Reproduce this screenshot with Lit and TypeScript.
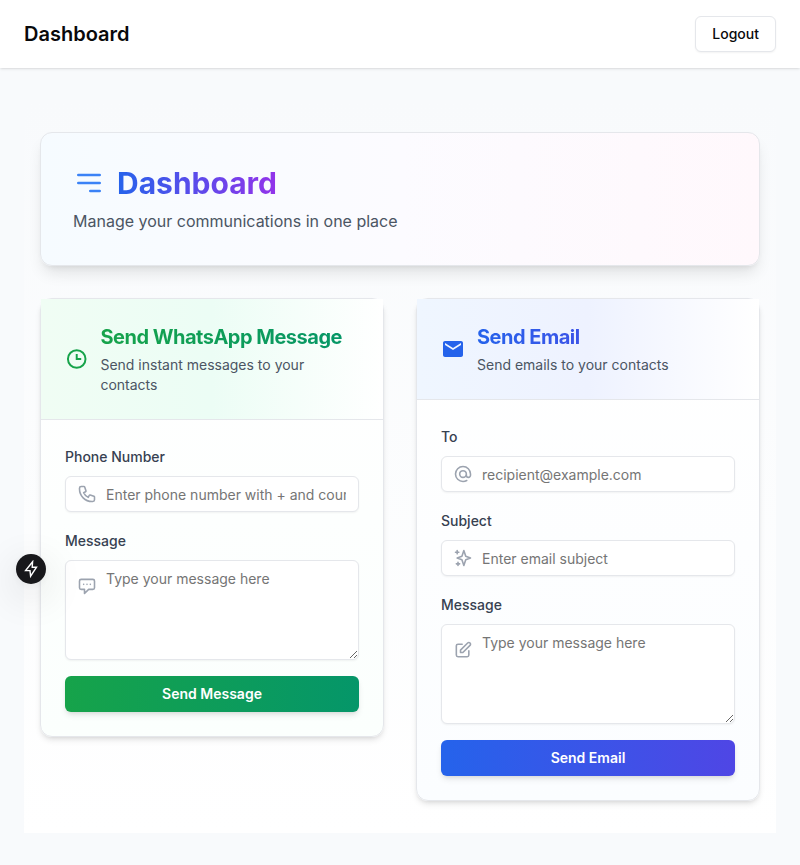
import { LitElement, html, css, svg } from "lit";
import { customElement } from "lit/decorators.js";

const outline = (d: string) => html`<svg class="field-icon" viewBox="0 0 24 24" fill="none" stroke="currentColor" stroke-width="1.9" stroke-linecap="round" stroke-linejoin="round">${svg`<path d=${d}></path>`}</svg>`;

const PHONE = "M3 5a2 2 0 012-2h3.28a1 1 0 01.948.684l1.498 4.493a1 1 0 01-.502 1.21l-2.257 1.13a11.042 11.042 0 005.516 5.516l1.13-2.257a1 1 0 011.21-.502l4.493 1.498a1 1 0 01.684.949V19a2 2 0 01-2 2h-1C9.716 21 3 14.284 3 6V5z";
const CHAT = "M8 10h.01M12 10h.01M16 10h.01M9 16H5a2 2 0 01-2-2V6a2 2 0 012-2h14a2 2 0 012 2v8a2 2 0 01-2 2h-5l-5 5v-5z";
const AT = "M16 12a4 4 0 10-8 0 4 4 0 008 0zm0 0v1.5a2.5 2.5 0 005 0V12a9 9 0 10-9 9m4.5-1.206a8.959 8.959 0 01-4.5 1.207";
const SPARK = "M5 3v4M3 5h4M6 17v4m-2-2h4m5-16l2.286 6.857L21 12l-5.714 2.143L13 21l-2.286-6.857L5 12l5.714-2.143L13 3z";
const PENCIL = "M11 5H6a2 2 0 00-2 2v11a2 2 0 002 2h11a2 2 0 002-2v-5m-1.414-9.414a2 2 0 112.828 2.828L11.828 15H9v-2.828l8.586-8.586z";

@customElement("app-root")
export class AppRoot extends LitElement {
  static styles = css`
    :host { display: block; min-height: 865px; background: #f8fafc; font-family: Inter, "Liberation Sans", sans-serif; font-size: 16px; line-height: 24px; color: #09090b; }
    * { box-sizing: border-box; }
    h1, h2, h3, p { margin: 0; }
    svg { display: block; }
    .top { display: flex; justify-content: space-between; align-items: center; height: 68px; padding: 0 24px; background: #fff; box-shadow: 0 1px 3px rgba(0,0,0,.1), 0 1px 2px -1px rgba(0,0,0,.1); }
    .brand { font-size: 20px; line-height: 28px; font-weight: 600; }
    .logout { height: 36px; padding: 0 16px; border: 1px solid #e5e7eb; border-radius: 6px; background: #fff; font: 500 14px/20px Inter, sans-serif; color: #09090b; box-shadow: 0 1px 2px rgba(0,0,0,.05); }
    main { padding: 32px 24px; }
    .panel { padding: 32px 16px; display: flex; flex-direction: column; gap: 32px; background: linear-gradient(to bottom, #f8fafc, #fff); }
    .hero { border: 1px solid #e5e7eb; border-radius: 12px; padding: 32px; background: linear-gradient(to right, #f6fbff, #fcfbff 50%, #fff8fc); box-shadow: 0 10px 15px -3px rgba(0,0,0,.1), 0 4px 6px -4px rgba(0,0,0,.1); }
    .hero-row { display: flex; align-items: center; gap: 12px; height: 36px; }
    .hero-icon { width: 32px; height: 32px; color: #3b82f6; }
    .hero h2 { font-size: 30px; line-height: 36px; font-weight: 700; }
    .hero p { margin-top: 8px; color: #4b5563; }
    .clip { -webkit-background-clip: text; background-clip: text; color: transparent; }
    .hero-title { background-image: linear-gradient(to right, #2563eb, #9333ea); }
    .grid { display: grid; grid-template-columns: 1fr 1fr; gap: 32px; align-items: start; }
    .card { border: 1px solid #e5e7eb; border-radius: 12px; box-shadow: 0 4px 6px -1px rgba(0,0,0,.1), 0 2px 4px -2px rgba(0,0,0,.1); }
    .card.green { background: linear-gradient(to bottom, #fff, #fbfffd); }
    .card.blue { background: linear-gradient(to bottom, #fff, #fbfdff); }
    .head { display: flex; align-items: center; gap: 12px; padding: 24px; border-bottom: 1px solid #e5e7eb; }
    .green .head { background: linear-gradient(to right, #f0fdf4, #ecfdf5 50%, #fff); }
    .blue .head { background: linear-gradient(to right, #eff6ff, #eef2ff 50%, #fff); }
    .head svg { width: 24px; height: 24px; }
    .green .head svg { color: #16a34a; }
    .blue .head svg { color: #2563eb; }
    .head h3 { font-size: 20px; line-height: 28px; font-weight: 700; letter-spacing: -0.5px; }
    .green h3, .green .send { background-image: linear-gradient(to right, #16a34a, #059669); }
    .blue h3, .blue .send { background-image: linear-gradient(to right, #2563eb, #4f46e5); }
    .head p { margin-top: 4px; font-size: 14px; line-height: 20px; color: #4b5563; }
    .form { display: flex; flex-direction: column; gap: 16px; padding: 24px; }
    .field { display: flex; flex-direction: column; gap: 8px; }
    .label { height: 24px; font-size: 14px; line-height: 26px; font-weight: 500; color: #374151; }
    .wrap { position: relative; display: flex; }
    .field-icon { position: absolute; left: 12px; top: 8px; width: 20px; height: 20px; color: #9ca3af; }
    .wrap.tall .field-icon { top: 16px; }
    input, textarea { display: block; width: 100%; margin: 0; border: 1px solid #e5e7eb; border-radius: 6px; background: #fff; box-shadow: 0 1px 2px rgba(0,0,0,.05); font: 400 14px/20px Inter, sans-serif; outline: none; }
    input { height: 36px; padding: 4px 12px 4px 40px; }
    textarea { height: 100px; padding: 8px 12px 8px 40px; resize: vertical; }
    ::placeholder { color: #757575; opacity: 1; }
    .send { height: 36px; border: 0; border-radius: 6px; color: #fff; font: 600 14px/20px Inter, sans-serif; box-shadow: 0 4px 6px -1px rgba(0,0,0,.1), 0 2px 4px -2px rgba(0,0,0,.1); }
    .bolt { position: fixed; left: 16px; top: 554px; width: 30px; height: 30px; border-radius: 50%; background: #18181b; color: #fff; display: grid; place-items: center; box-shadow: 0 11px 40px rgba(0,0,0,.16), 0 2px 10px rgba(0,0,0,.06); }
    .bolt svg { width: 18px; height: 18px; }
  `;

  private field(label: string, icon: string, placeholder: string, tall = false) {
    return html`<div class="field">
      <label class="label">${label}</label>
      <div class="wrap ${tall ? "tall" : ""}">
        ${tall ? html`<textarea placeholder=${placeholder}></textarea>` : html`<input type="text" placeholder=${placeholder} />`}
        ${outline(icon)}
      </div>
    </div>`;
  }

  render() {
    return html`
      <header class="top"><h1 class="brand">Dashboard</h1><button class="logout">Logout</button></header>
      <main><div class="panel">
        <section class="hero">
          <div class="hero-row">
            <svg class="hero-icon" viewBox="0 0 24 24" fill="none" stroke="currentColor" stroke-width="2" stroke-linecap="round"><path d="M4 6h16M4 12h16m-7 6h7"></path></svg>
            <h2 class="clip hero-title">Dashboard</h2>
          </div>
          <p>Manage your communications in one place</p>
        </section>
        <div class="grid">
          <section class="card green">
            <div class="head">
              <svg viewBox="0 0 24 24" fill="none" stroke="currentColor" stroke-width="2"><circle cx="12" cy="12" r="9"></circle><path d="M11 7h2v4h3.6v2H11z" fill="currentColor" stroke="none"></path></svg>
              <div><h3 class="clip">Send WhatsApp Message</h3><p>Send instant messages to your contacts</p></div>
            </div>
            <div class="form">
              ${this.field("Phone Number", PHONE, "Enter phone number with + and country code")}
              ${this.field("Message", CHAT, "Type your message here", true)}
              <button class="send">Send Message</button>
            </div>
          </section>
          <section class="card blue">
            <div class="head">
              <svg viewBox="0 0 24 24" fill="currentColor"><path d="M20 4H4c-1.1 0-1.99.9-1.99 2L2 18c0 1.1.9 2 2 2h16c1.1 0 2-.9 2-2V6c0-1.1-.9-2-2-2zm0 4l-8 5-8-5V6l8 5 8-5v2z"></path></svg>
              <div><h3 class="clip">Send Email</h3><p>Send emails to your contacts</p></div>
            </div>
            <div class="form">
              ${this.field("To", AT, "recipient@example.com")}
              ${this.field("Subject", SPARK, "Enter email subject")}
              ${this.field("Message", PENCIL, "Type your message here", true)}
              <button class="send">Send Email</button>
            </div>
          </section>
        </div>
      </div></main>
      <div class="bolt"><svg viewBox="0 0 18 18" fill="none" stroke="currentColor" stroke-width="1.4" stroke-linejoin="miter"><path d="M10.6 1.8 3.6 10.6H8L8.6 16.2 14.5 7.2H10.2z"></path></svg></div>
    `;
  }
}
